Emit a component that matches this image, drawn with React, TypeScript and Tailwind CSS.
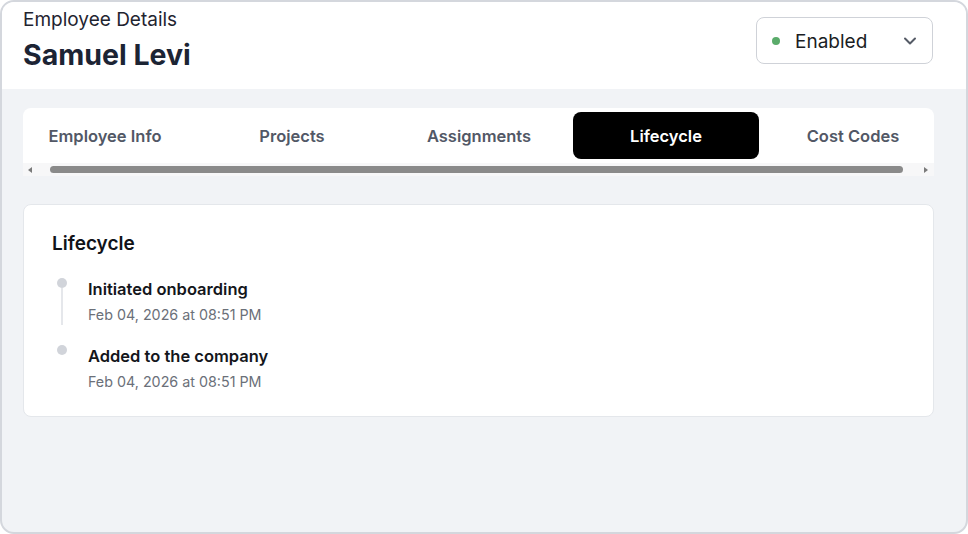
import React from "react";

const tabs = ["Employee Info", "Projects", "Assignments", "Lifecycle", "Cost Codes"];

export default function App() {
  return (
    <div
      className="w-[968px] h-[534px] bg-white"
      style={{ fontFamily: "Inter, 'Noto Sans', sans-serif" }}
    >
      <div className="w-full h-full rounded-[14px] border-2 border-[#d4d7dd] overflow-hidden flex flex-col bg-[#f1f3f6]">
        <header className="h-[87px] shrink-0 bg-white flex items-start justify-between pl-[21px] pr-[33px]">
          <div className="flex flex-col">
            <div className="text-[19px] leading-[24px] text-[#1f2430] mt-[6px]">Employee Details</div>
            <div className="text-[28.5px] leading-[34px] font-bold text-[#1c2434] mt-[6px]">Samuel Levi</div>
          </div>
          <button className="mt-[15px] w-[177px] h-[47px] rounded-[8px] border border-[#cfd2d8] bg-white flex items-center pl-[15px] pr-[12px]">
            <span className="w-[8px] h-[8px] rounded-full bg-[#5aab6a]" />
            <span className="ml-[15px] text-[19px] text-[#1a1d24] pt-[3px]">Enabled</span>
            <svg className="ml-auto" width="20" height="20" viewBox="0 0 24 24" fill="none" stroke="#555b66" strokeWidth="2.4" strokeLinecap="round" strokeLinejoin="round">
              <path d="M6 9l6 6 6-6" />
            </svg>
          </button>
        </header>
        <main className="flex-1 pt-[19px] pl-[21px] pr-[32px]">
          <div className="rounded-t-[8px] bg-white overflow-hidden">
            <div className="flex p-[4px] ml-[-15px]">
              {tabs.map((t) => (
                <div
                  key={t}
                  className={
                    t === "Lifecycle"
                      ? "w-[186px] mr-[1px] shrink-0 h-[47px] pt-[2px] rounded-[8px] bg-black text-white flex items-center justify-center text-[16.5px] font-semibold"
                      : "w-[186px] mr-[1px] shrink-0 h-[47px] pt-[2px] rounded-[8px] text-[#525866] flex items-center justify-center text-[16.5px] font-semibold"
                  }
                >
                  {t}
                </div>
              ))}
            </div>
          </div>
          <div className="h-[13px] bg-[#f7f7f8] flex items-center px-[2px]">
            <svg width="8" height="8" viewBox="0 0 8 8" className="ml-[1px]">
              <path d="M6 1L2 4l4 3z" fill="#7a7a7a" />
            </svg>
            <div className="ml-[16px] w-[853px] h-[7px] rounded-full bg-[#8a8a8a]" />
            <svg width="8" height="8" viewBox="0 0 8 8" className="ml-[19px]">
              <path d="M2 1l4 3-4 3z" fill="#7a7a7a" />
            </svg>
          </div>
          <section className="mt-[28px] bg-white rounded-[8px] border border-[#e4e7eb] pl-[28px] pt-[27px] pb-[24px]">
            <h2 className="text-[19px] leading-[24px] font-semibold text-[#111318]">Lifecycle</h2>
            <div className="mt-[22px] flex flex-col">
              <div className="flex">
                <div className="w-[20px] flex flex-col items-center shrink-0">
                  <span className="w-[10px] h-[10px] rounded-full bg-[#d1d4da]" />
                  <span className="w-[2px] h-[37px] bg-[#e5e7eb]" />
                </div>
                <div className="flex flex-col ml-[16px]">
                  <div className="text-[16.5px] leading-[22px] font-semibold text-[#14161b]">Initiated onboarding</div>
                  <div className="text-[14.3px] leading-[20px] text-[#6b7079] mt-[5px]">Feb 04, 2026 at 08:51 PM</div>
                </div>
              </div>
              <div className="flex mt-[20px]">
                <div className="w-[20px] flex flex-col items-center shrink-0">
                  <span className="w-[10px] h-[10px] rounded-full bg-[#d1d4da]" />
                </div>
                <div className="flex flex-col ml-[16px]">
                  <div className="text-[16.5px] leading-[22px] font-semibold text-[#14161b]">Added to the company</div>
                  <div className="text-[14.3px] leading-[20px] text-[#6b7079] mt-[5px]">Feb 04, 2026 at 08:51 PM</div>
                </div>
              </div>
            </div>
          </section>
        </main>
      </div>
    </div>
  );
}
